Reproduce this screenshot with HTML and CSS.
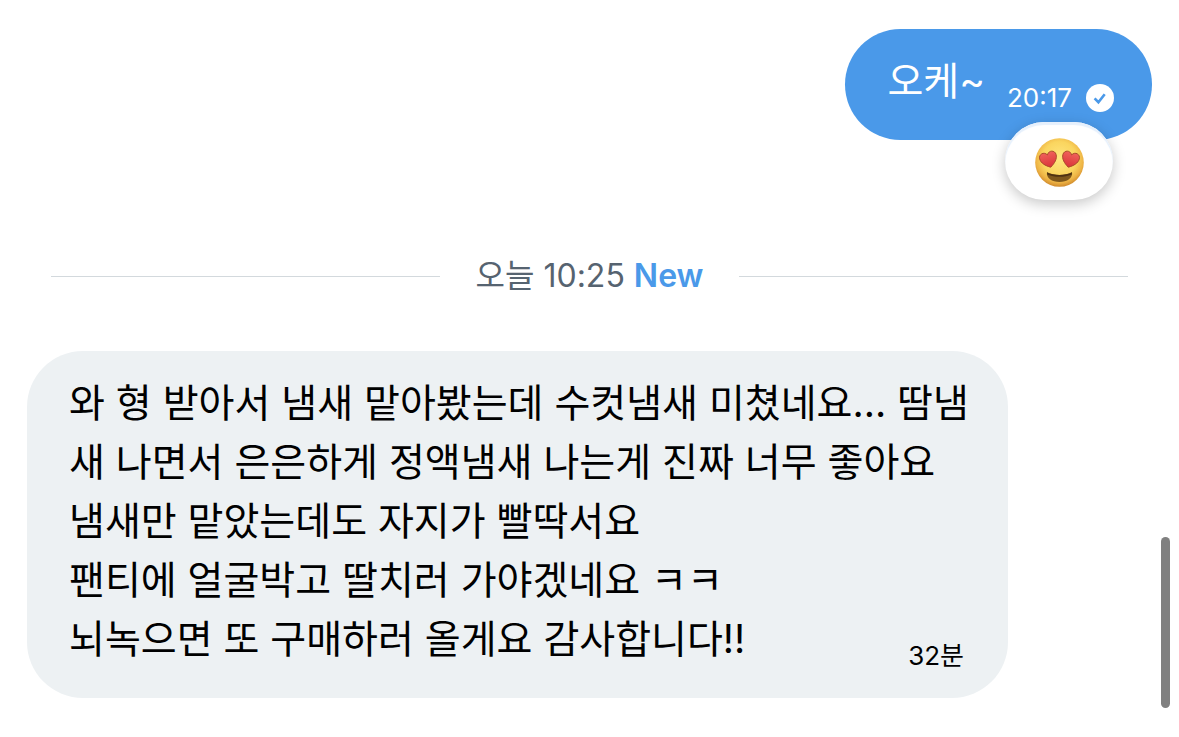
FILE: index.html
```html
<!doctype html>
<html lang="ko">
	<head>
		<meta charset="utf-8" />
		<title>Messages</title>
		<link rel="stylesheet" href="styles.css">
	</head>

	<body>
		<main class="thread">
			<div class="message sent">
				<p class="text">오케~</p>
				<div class="meta">
					<time>20:17</time>
					<svg class="check" viewBox="0 0 28 28" aria-label="Sent">
						<circle cx="14" cy="14" r="14" fill="#fff" />
						<path d="M8.600 14.400l3.800 3.800 6.300-8" fill="none" stroke="#4a99e9" stroke-width="2.6" />
					</svg>
				</div>
				<button class="reaction" aria-label="Reaction">
					<svg class="emoji" viewBox="0 0 49 49">
						<defs>
							<radialGradient id="face" cx="50%" cy="42%" r="58%">
								<stop offset="0" stop-color="#ffe680" />
								<stop offset="0.6" stop-color="#fad55f" />
								<stop offset="0.84" stop-color="#eeb445" />
								<stop offset="1" stop-color="#d08a2c" />
							</radialGradient>
							<linearGradient id="heart" x1="0" y1="0" x2="0" y2="1">
								<stop offset="0" stop-color="#f0605a" />
								<stop offset="1" stop-color="#d93439" />
							</linearGradient>
							<path id="heartShape" d="M0 8.500C-5 5.600-8.500 2-8.500-2.400C-8.500-7-2.500-8.800 0-4.200C2.500-8.800 8.500-7 8.500-2.400C8.500 2 5 5.600 0 8.500z" />
						</defs>
						<circle cx="24.5" cy="24.5" r="24.3" fill="url(#face)" />
						<use href="#heartShape" transform="translate(13.500 21) rotate(-15)" fill="url(#heart)" stroke="#a8482a" stroke-width="0.9" />
						<use href="#heartShape" transform="translate(35.500 21) rotate(15)" fill="url(#heart)" stroke="#a8482a" stroke-width="0.9" />
						<path d="M12 34.200c7 3.600 18 3.600 25 0c1.200 5.500-5 9.800-12.500 9.800s-13.700-4.300-12.500-9.800z" fill="#7d571c" />
						<path d="M12 34.200c7 3.600 18 3.600 25 0l-.3 2.200c-7.500 3.200-16.900 3.200-24.400 0z" fill="#4f3312" />
					</svg>
				</button>
			</div>

			<div class="divider">
				<span>오늘 10:25 <strong>New</strong></span>
			</div>

			<div class="message received">
				<p class="text">
					와 형 받아서 냄새 맡아봤는데 수컷냄새 미쳤네요... 땀냄새 나면서 은은하게 정액냄새 나는게 진짜 너무 좋아요<br />
					냄새만 맡았는데도 자지가 빨딱서요<br />
					팬티에 얼굴박고 딸치러 가야겠네요 ㅋㅋ<br />
					뇌녹으면 또 구매하러 올게요 감사합니다!!
				</p>
				<div class="meta">
					<time>32분</time>
				</div>
			</div>
		</main>
		<div class="scroll-thumb"></div>
	</body>
</html>
```
FILE: styles.css
```css
body {
	margin: 0;
	background-color: #ffffff;
	color: #0f1419;
	font-family: "Inter", "Noto Sans CJK KR", sans-serif;
}

.thread {
	display: flex;
	flex-direction: column;
	padding: 29px 27px;
}

.message {
	padding: 22px 38px 26px 42px;
	border-radius: 56px;
}

.text {
	margin: 0;
	padding-bottom: 4px;
	font-size: 39px;
	line-height: 59px;
}

.meta {
	display: flex;
	align-items: center;
	gap: 14px;
	font-size: 26px;
	line-height: 32px;
}

.sent {
	position: relative;
	display: flex;
	align-items: flex-end;
	align-self: flex-end;
	gap: 22px;
	background-color: #4a99e9;
	color: #ffffff;
}

.check {
	width: 28px;
	height: 28px;
}

/* hangs over the bottom edge of the bubble */
.reaction {
	position: absolute;
	right: 39px;
	bottom: -60px;
	display: flex;
	align-items: center;
	justify-content: center;
	width: 108px;
	height: 78px;
	padding: 2px 0 0;
	border: 0;
	border-radius: 40px;
	background-color: #ffffff;
	box-shadow:
		inset 0 3px 1px #e6f0fc,
		0 4px 14px rgba(0, 0, 0, 0.22);
}

.emoji {
	width: 49px;
	height: 49px;
}

.divider {
	display: flex;
	align-items: center;
	gap: 36px;
	margin: 116px 24px 55px;
	color: #566370;
	font-size: 32px;
	line-height: 40px;
}

.divider::before,
.divider::after {
	content: "";
	flex: 1;
	height: 1px;
	background-color: #d3d9dd;
}

.divider strong {
	color: #4a99e9;
	font-weight: 600;
}

.received {
	display: grid;
	align-self: flex-start;
	max-width: 901px;
	background-color: #edf1f3;
	color: #000000;
}

/* text and time share one cell, the time sits in its bottom corner */
.received .text,
.received .meta {
	grid-area: 1 / 1;
}

.received .meta {
	align-self: end;
	justify-self: end;
	padding-right: 6px;
}

.scroll-thumb {
	position: fixed;
	right: 9px;
	bottom: 29px;
	width: 9px;
	height: 171px;
	border-radius: 5px;
	background-color: #808080;
}
```
